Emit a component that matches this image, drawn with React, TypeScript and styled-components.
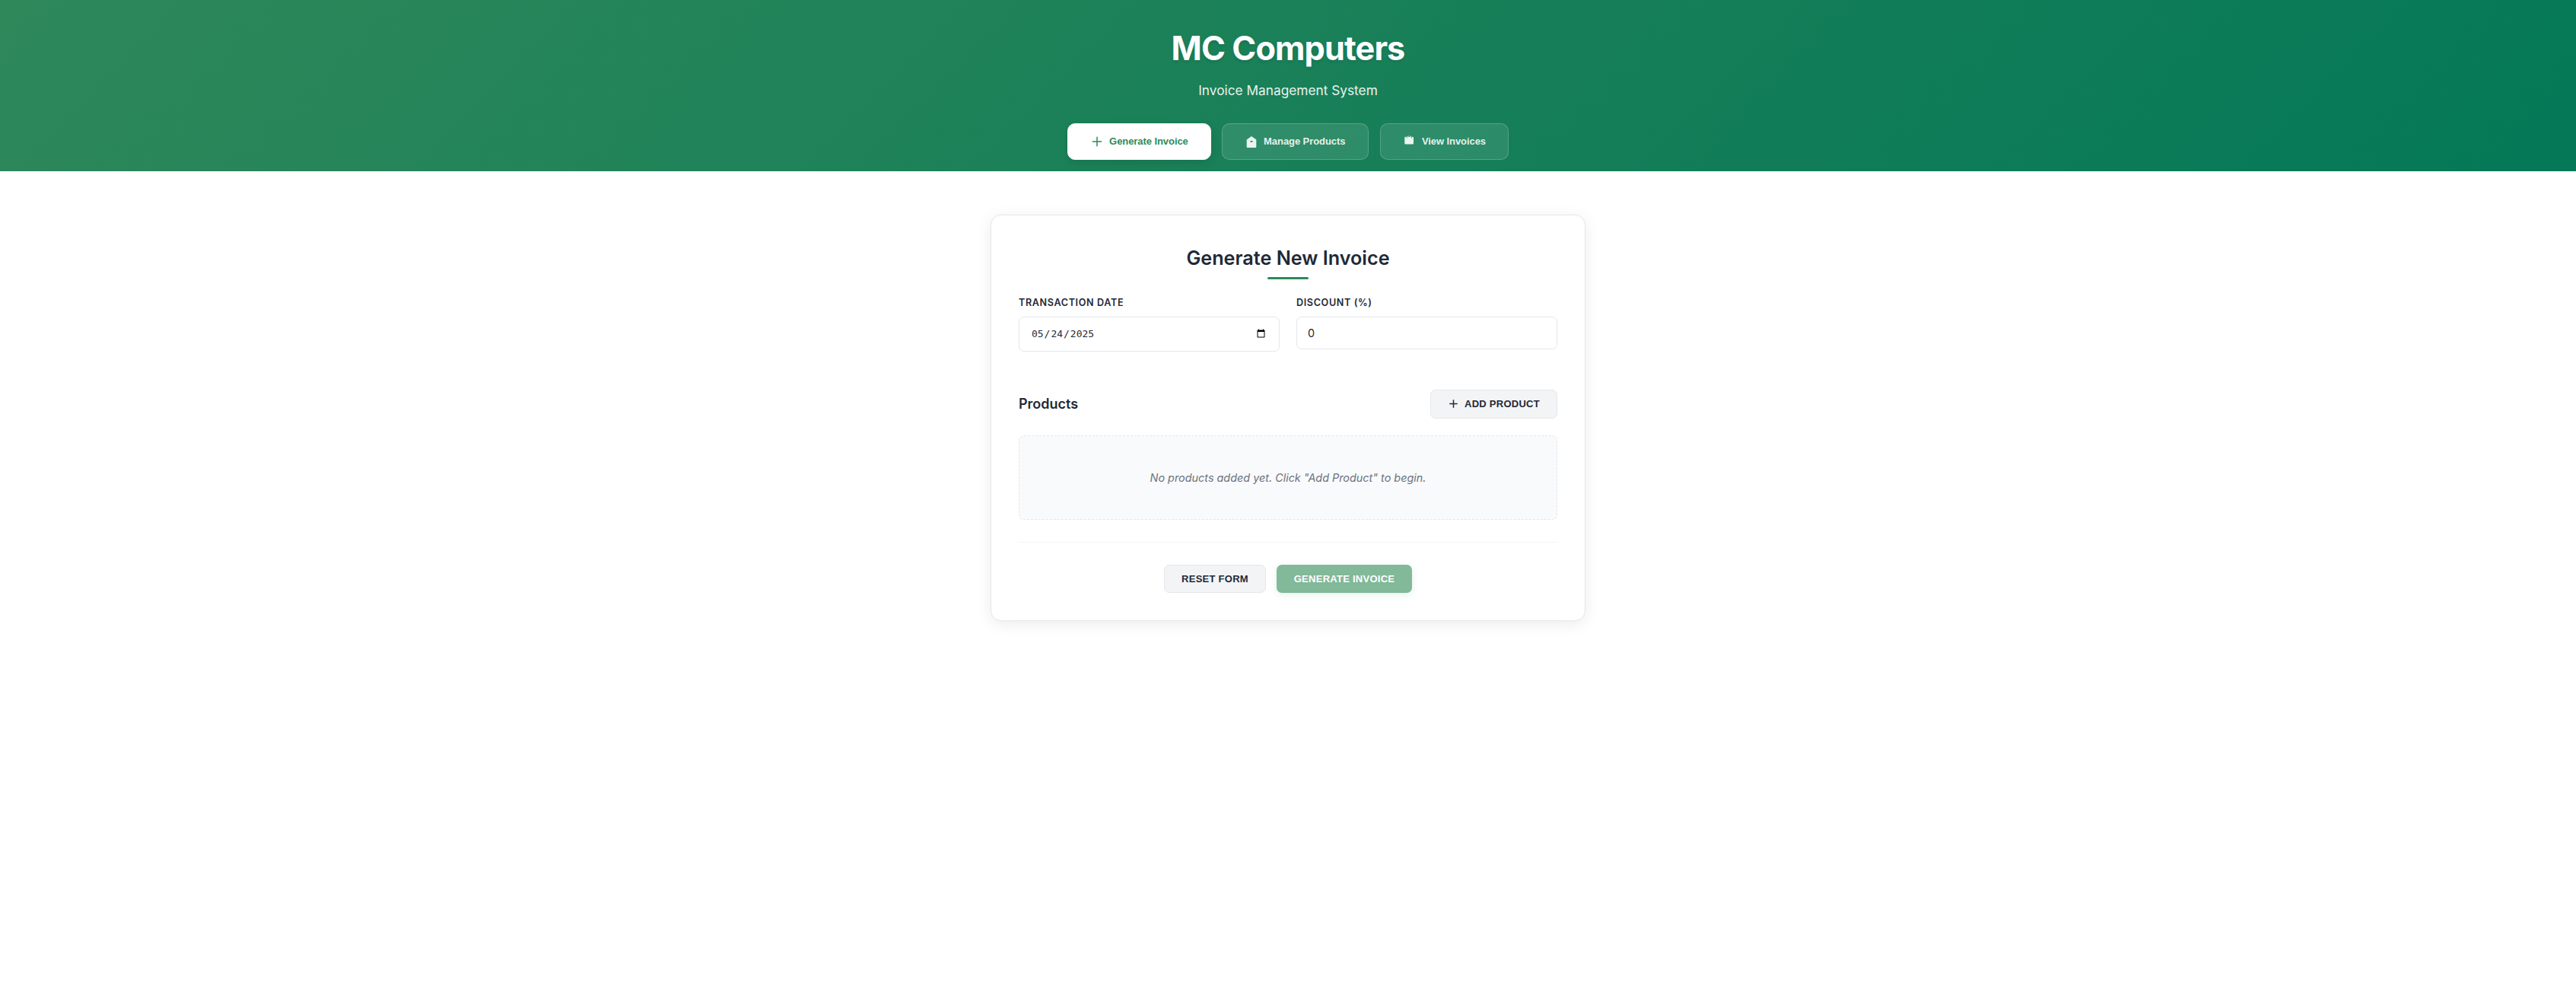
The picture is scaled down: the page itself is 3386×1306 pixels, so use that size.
import React, { useState } from "react";
import styled, { createGlobalStyle, css } from "styled-components";

const Global = createGlobalStyle`
  *, *::before, *::after { box-sizing: border-box; }
  body {
    margin: 0;
    background: #fff;
    color: #1f2937;
    font-family: Inter, "Liberation Sans", sans-serif;
  }
`;

const Page = styled.div`
  min-height: 100vh;
  background: #fff;
`;

const Header = styled.header`
  display: flex;
  flex-direction: column;
  align-items: center;
  height: 225px;
  padding-top: 35px;
  color: #fff;
  background: linear-gradient(135deg, #2e885a 0%, #047857 100%);
`;

const Brand = styled.h1`
  margin: 0;
  font-size: 43.2px;
  line-height: 56px;
  font-weight: 700;
  letter-spacing: -0.02em;
  text-shadow: 0 2px 4px rgba(0, 0, 0, 0.1);
`;

const Tagline = styled.p`
  margin: 15px 0 0;
  font-size: 17.28px;
  line-height: 26px;
  opacity: 0.9;
`;

const Nav = styled.nav`
  display: flex;
  gap: 14.4px;
  margin-top: 30px;
`;

const NavButton = styled.button<{ $active?: boolean; $width: number }>`
  display: flex;
  align-items: center;
  gap: 7px;
  width: ${(p) => p.$width}px;
  height: 48px;
  padding: 0 0 1px 29px;
  border: 1px solid rgba(255, 255, 255, 0.2);
  border-radius: 10px;
  font: 700 13px "Liberation Sans", Arial, sans-serif;
  letter-spacing: -0.07px;
  white-space: nowrap;
  color: rgba(255, 255, 255, 0.9);
  background: rgba(255, 255, 255, 0.1);
  ${(p) =>
    p.$active &&
    css`
      color: #2e8b57;
      background: #fff;
      border-color: #fff;
      box-shadow: 0 4px 12px rgba(0, 0, 0, 0.1);
    `}
`;

const Card = styled.main`
  width: 782px;
  height: 534px;
  margin: 57px auto 0;
  padding: 39px 36px 0;
  background: #fff;
  border: 1px solid #e5e7eb;
  border-radius: 14px;
  box-shadow: 0 4px 20px rgba(0, 0, 0, 0.08);
`;

const Title = styled.h2`
  display: flex;
  flex-direction: column;
  align-items: center;
  gap: 8px;
  margin: 0;
  font-size: 25.2px;
  line-height: 34px;
  font-weight: 600;
  &::after {
    content: "";
    width: 54px;
    height: 3px;
    border-radius: 2px;
    background: #2e8b57;
  }
`;

const Fields = styled.div`
  display: grid;
  grid-template-columns: 1fr 1fr;
  align-items: start;
  gap: 22px;
  height: 145px;
  padding-top: 21px;
`;

const Label = styled.label`
  display: flex;
  flex-direction: column;
  gap: 8px;
  font-size: 12.6px;
  line-height: 20px;
  font-weight: 600;
  letter-spacing: 0.05em;
  text-transform: uppercase;
`;

const Input = styled.input`
  width: 100%;
  height: ${(p) => (p.type === "date" ? 46 : 43)}px;
  padding: ${(p) => (p.type === "date" ? "0 15px 1px" : "0 14px 1px")};
  border: 1px solid #e5e7eb;
  border-radius: 7px;
  outline: none;
  background: #fff;
  color: #1f2937;
  font-family: ${(p) => (p.type === "date" ? '"DejaVu Sans Mono", monospace' : "Inter, sans-serif")};
  font-size: ${(p) => (p.type === "date" ? 12.96 : 14.4)}px;
`;

const SectionHead = styled.div`
  display: flex;
  justify-content: space-between;
  align-items: center;
`;

const SectionTitle = styled.h3`
  margin: 0 0 1px;
  font-size: 18px;
  font-weight: 600;
`;

const Button = styled.button<{ $primary?: boolean; $width: number; $height?: number }>`
  display: flex;
  align-items: center;
  justify-content: center;
  gap: 7px;
  width: ${(p) => p.$width}px;
  height: ${(p) => p.$height ?? 37}px;
  padding: 0 0 1px;
  border: 1px solid #e5e7eb;
  border-radius: 7px;
  font: 700 13px "Liberation Sans", Arial, sans-serif;
  letter-spacing: 0.26px;
  text-transform: uppercase;
  color: #1f2937;
  background: #f3f4f6;
  ${(p) =>
    p.$primary &&
    css`
      color: #fff;
      border: 0;
      background: #2e8b57;
      opacity: 0.6;
      box-shadow: 0 2px 8px rgba(46, 139, 87, 0.2);
    `}
`;

const Empty = styled.p`
  display: flex;
  align-items: center;
  justify-content: center;
  height: 111px;
  margin: 22px 0 29px;
  border: 1px dashed #e5e7eb;
  border-radius: 7px;
  background: #f9fafb;
  color: #6b7280;
  font-size: 14.4px;
  font-style: italic;
`;

const Actions = styled.div`
  display: flex;
  justify-content: center;
  gap: 14px;
  padding-top: 29px;
  border-top: 1px solid #f3f4f6;
`;

const PlusIcon = ({ box, arm }: { box: number; arm: number }) => (
  <svg width={box} height={box} viewBox={`${-box / 2} ${-box / 2} ${box} ${box}`} fill="none" stroke="currentColor" strokeWidth="1.5">
    <path d={`M0 ${-arm}V${arm}M${-arm} 0H${arm}`} />
  </svg>
);

const ProductsIcon = () => (
  <svg width="18" height="18" viewBox="0 0 18 18" fill="currentColor">
    <path fillRule="evenodd" d="M9 2l6.300 4.500V16a1 1 0 0 1-1 1H3.700a1 1 0 0 1-1-1V6.500zM7.500 8v1.700h3V8z" />
  </svg>
);

const InvoicesIcon = () => (
  <svg width="18" height="18" viewBox="0 0 18 18" fill="currentColor">
    <path d="M3.300 2.800h1.400v1.400h1V1.700h5.200v2.500h1V2.800h1.100a1 1 0 0 1 1 1v7.600a1 1 0 0 1-1 1H3.300a1 1 0 0 1-1-1V3.800a1 1 0 0 1 1-1z" />
    <path d="M6.700 2.500h3.200" stroke="#318c69" strokeWidth="0.8" />
  </svg>
);

export default function App() {
  const [date, setDate] = useState("2025-05-24");
  const [discount, setDiscount] = useState("0");
  return (
    <Page>
      <Global />
      <Header>
        <Brand>MC Computers</Brand>
        <Tagline>Invoice Management System</Tagline>
        <Nav>
          <NavButton $active $width={188.6}><PlusIcon box={18} arm={6.2} />Generate Invoice</NavButton>
          <NavButton $width={193.4}><ProductsIcon />Manage Products</NavButton>
          <NavButton $width={169}><InvoicesIcon />View Invoices</NavButton>
        </Nav>
      </Header>
      <Card>
        <Title>Generate New Invoice</Title>
        <Fields>
          <Label>Transaction Date
            <Input type="date" value={date} onChange={(e) => setDate(e.target.value)} />
          </Label>
          <Label>Discount (%)
            <Input type="number" value={discount} onChange={(e) => setDiscount(e.target.value)} />
          </Label>
        </Fields>
        <SectionHead>
          <SectionTitle>Products</SectionTitle>
          <Button $width={167} $height={38}><PlusIcon box={15} arm={5.2} />Add Product</Button>
        </SectionHead>
        <Empty>No products added yet. Click "Add Product" to begin.</Empty>
        <Actions>
          <Button $width={134}>Reset Form</Button>
          <Button $primary $width={178} disabled>Generate Invoice</Button>
        </Actions>
      </Card>
    </Page>
  );
}
